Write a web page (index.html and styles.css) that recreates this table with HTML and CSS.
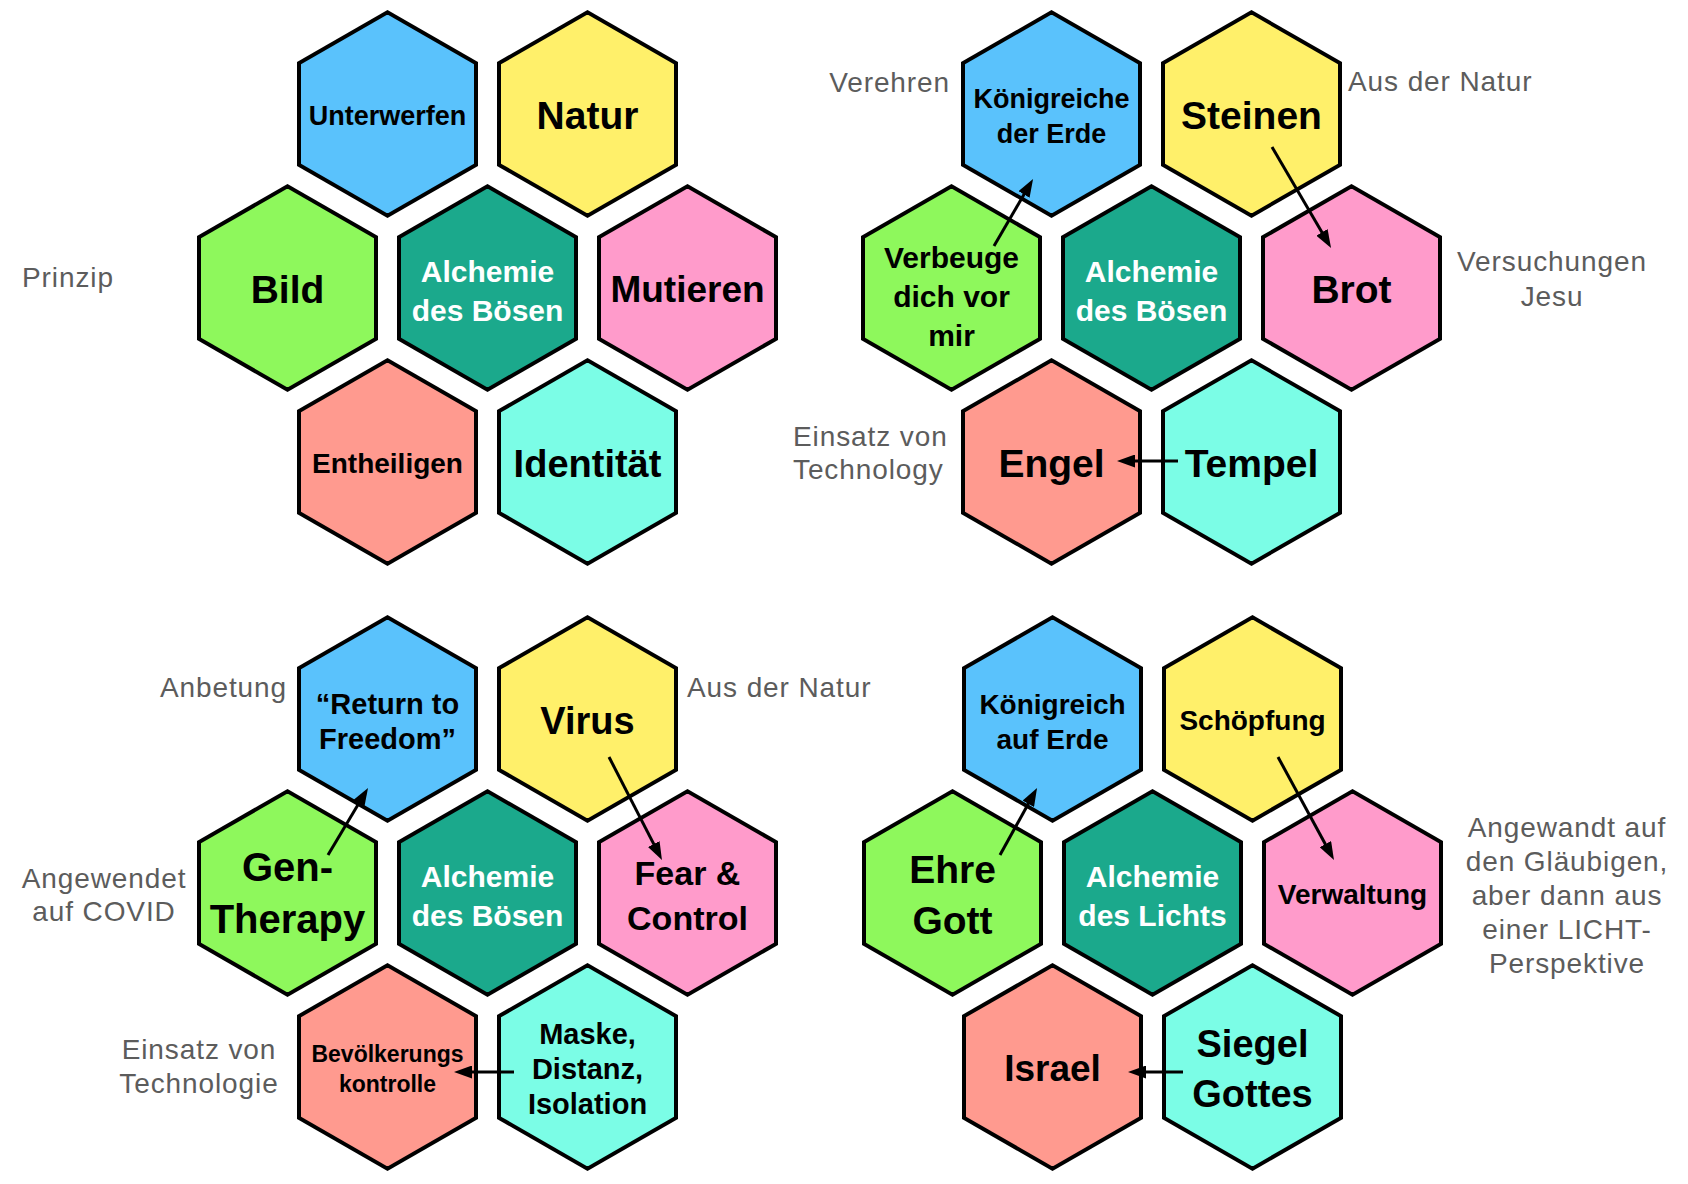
FILE: index.html
```html
<!DOCTYPE html>
<html lang="de">
<head>
<meta charset="utf-8">
<title>Alchemie</title>
<link rel="stylesheet" href="styles.css">
</head>
<body>
<div class="page">

  <section class="cluster">
    <div class="row">
      <div class="hex"><div class="fill blue s27">Unterwerfen</div></div>
      <div class="hex"><div class="fill yellow s39">Natur</div></div>
    </div>
    <div class="row">
      <div class="hex"><div class="fill green s39">Bild</div></div>
      <div class="hex"><div class="fill teal s30">Alchemie<br>des Bösen</div></div>
      <div class="hex"><div class="fill pink s37">Mutieren</div></div>
    </div>
    <div class="row">
      <div class="hex"><div class="fill salmon s28">Entheiligen</div></div>
      <div class="hex"><div class="fill cyan s38">Identität</div></div>
    </div>
    <p class="note n-prinzip">Prinzip</p>
  </section>

  <section class="cluster">
    <div class="row">
      <div class="hex"><div class="fill blue s27 lh35">Königreiche<br>der Erde</div></div>
      <div class="hex"><div class="fill yellow s39">Steinen</div></div>
    </div>
    <div class="row">
      <div class="hex"><div class="fill green s30 v16">Verbeuge<br>dich vor<br>mir</div></div>
      <div class="hex"><div class="fill teal s30">Alchemie<br>des Bösen</div></div>
      <div class="hex"><div class="fill pink s39">Brot</div></div>
    </div>
    <div class="row">
      <div class="hex"><div class="fill salmon s39">Engel</div></div>
      <div class="hex"><div class="fill cyan s39">Tempel</div></div>
    </div>
    <p class="note n-verehren">Verehren</p>
    <p class="note n-natur2">Aus der Natur</p>
    <p class="note n-versuch">Versuchungen<br>Jesu</p>
    <p class="note n-einsatz2">Einsatz von<br>Technology</p>
    <svg class="arrows" width="581" height="556" viewBox="0 0 581 556">
      <defs>
        <marker id="ah2" viewBox="0 0 18 13" refX="8" refY="6.5" markerWidth="18" markerHeight="13" markerUnits="userSpaceOnUse" orient="auto">
          <path d="M0 0 L18 6.5 L0 13 Z" fill="#000"/>
        </marker>
      </defs>
      <line x1="133" y1="236" x2="167" y2="177.6" marker-end="url(#ah2)"/>
      <line x1="411" y1="137" x2="465" y2="229.3" marker-end="url(#ah2)"/>
      <line x1="317" y1="451" x2="266" y2="451" marker-end="url(#ah2)"/>
    </svg>
  </section>

  <section class="cluster">
    <div class="row">
      <div class="hex"><div class="fill blue s29 lh35">“Return to<br>Freedom”</div></div>
      <div class="hex"><div class="fill yellow s38">Virus</div></div>
    </div>
    <div class="row">
      <div class="hex"><div class="fill green s40 v0">Gen-<br>Therapy</div></div>
      <div class="hex"><div class="fill teal s30">Alchemie<br>des Bösen</div></div>
      <div class="hex"><div class="fill pink s34">Fear &amp;<br>Control</div></div>
    </div>
    <div class="row">
      <div class="hex"><div class="fill salmon s23 v6">Bevölkerungs<br>kontrolle</div></div>
      <div class="hex"><div class="fill cyan s29 lh35">Maske,<br>Distanz,<br>Isolation</div></div>
    </div>
    <p class="note n-anbetung">Anbetung</p>
    <p class="note n-natur3">Aus der Natur</p>
    <p class="note n-covid">Angewendet<br>auf COVID</p>
    <p class="note n-einsatz3">Einsatz von<br>Technologie</p>
    <svg class="arrows" width="581" height="556" viewBox="0 0 581 556">
      <defs>
        <marker id="ah3" viewBox="0 0 18 13" refX="8" refY="6.5" markerWidth="18" markerHeight="13" markerUnits="userSpaceOnUse" orient="auto">
          <path d="M0 0 L18 6.5 L0 13 Z" fill="#000"/>
        </marker>
      </defs>
      <line x1="131" y1="240" x2="165.9" y2="181.6" marker-end="url(#ah3)"/>
      <line x1="412" y1="142" x2="460.4" y2="236.1" marker-end="url(#ah3)"/>
      <line x1="317" y1="457" x2="267" y2="457" marker-end="url(#ah3)"/>
    </svg>
  </section>

  <section class="cluster shift">
    <div class="row">
      <div class="hex"><div class="fill blue s28 lh35">Königreich<br>auf Erde</div></div>
      <div class="hex"><div class="fill yellow s28">Schöpfung</div></div>
    </div>
    <div class="row">
      <div class="hex"><div class="fill green s39">Ehre<br>Gott</div></div>
      <div class="hex"><div class="fill teal s30">Alchemie<br>des Lichts</div></div>
      <div class="hex"><div class="fill pink s28">Verwaltung</div></div>
    </div>
    <div class="row">
      <div class="hex"><div class="fill salmon s37">Israel</div></div>
      <div class="hex"><div class="fill cyan s38">Siegel<br>Gottes</div></div>
    </div>
    <p class="note n-angewandt">Angewandt auf<br>den Gläubigen,<br>aber dann aus<br>einer LICHT-<br>Perspektive</p>
    <svg class="arrows" width="581" height="556" viewBox="0 0 581 556">
      <defs>
        <marker id="ah4" viewBox="0 0 18 13" refX="8" refY="6.5" markerWidth="18" markerHeight="13" markerUnits="userSpaceOnUse" orient="auto">
          <path d="M0 0 L18 6.5 L0 13 Z" fill="#000"/>
        </marker>
      </defs>
      <line x1="137" y1="240" x2="169.2" y2="181.8" marker-end="url(#ah4)"/>
      <line x1="415" y1="142" x2="466.2" y2="236.2" marker-end="url(#ah4)"/>
      <line x1="320" y1="457" x2="275" y2="457" marker-end="url(#ah4)"/>
    </svg>
  </section>

</div>
</body>
</html>
```

FILE: styles.css
```css
html, body {
  margin: 0;
  padding: 0;
  background: #ffffff;
}

body {
  overflow: hidden;
}

.page {
  width: 1688px;
  height: 1184px;
  box-sizing: border-box;
  padding: 10px 0 0 197px;
  display: grid;
  grid-template-columns: 581px 581px;
  grid-template-rows: 556px 556px;
  column-gap: 83px;
  row-gap: 49px;
  overflow: hidden;
  font-family: "Liberation Sans", Arial, Helvetica, sans-serif;
}

.cluster {
  position: relative;
  display: flex;
  flex-direction: column;
  align-items: center;
}

.cluster.shift {
  margin-left: 2px;
}

.row {
  display: flex;
  gap: 19px;
}

.row + .row {
  margin-top: -34px;
}

.hex {
  width: 181px;
  height: 208px;
  box-sizing: border-box;
  padding: 4.6px 4px;
  background: #000;
  clip-path: polygon(50% 0, 100% 25%, 100% 75%, 50% 100%, 0 75%, 0 25%);
}

.fill {
  width: 100%;
  height: 100%;
  box-sizing: border-box;
  padding-top: 5px;
  clip-path: polygon(50% 0, 100% 25%, 100% 75%, 50% 100%, 0 75%, 0 25%);
  display: flex;
  align-items: center;
  justify-content: center;
  text-align: center;
  font-weight: 700;
  line-height: 1.3;
  color: #000;
  white-space: nowrap;
}

.fill.v0  { padding-top: 0; }
.fill.v6  { padding-top: 6px; }
.fill.v16 { padding-top: 16px; }
.fill.lh35 { line-height: 35px; }

.blue   { background: #5ac2fc; }
.yellow { background: #fff06a; }
.green  { background: #8ef85c; }
.teal   { background: #1ba98c; color: #ffffff; }
.pink   { background: #ff9bcb; }
.salmon { background: #ff9a8f; }
.cyan   { background: #7bfde6; }

.s23 { font-size: 23px; }
.s27 { font-size: 27px; }
.s28 { font-size: 28px; }
.s29 { font-size: 29px; }
.s30 { font-size: 30px; }
.s34 { font-size: 34px; }
.s37 { font-size: 37px; }
.s38 { font-size: 38px; }
.s39 { font-size: 39px; }
.s40 { font-size: 40px; }

.note {
  position: absolute;
  margin: 0;
  font-size: 28px;
  line-height: 33px;
  letter-spacing: 0.9px;
  font-weight: 400;
  color: #5c5c5c;
  white-space: nowrap;
}

.n-prinzip   { left: -175px; top: 251px; }

.n-verehren  { right: 492px; top: 56px; }
.n-natur2    { left: 487px; top: 55px; }
.n-versuch   { left: 571px; top: 234px; width: 240px; text-align: center; line-height: 35px; }
.n-einsatz2  { left: -68px; top: 410px; line-height: 33px; }

.n-anbetung  { right: 491px; top: 56px; }
.n-natur3    { left: 490px; top: 56px; }
.n-covid     { left: -193px; top: 247px; width: 200px; text-align: center; }
.n-einsatz3  { left: -118px; top: 418px; width: 240px; text-align: center; line-height: 34px; }

.n-angewandt { left: 589px; top: 196px; width: 230px; text-align: center; line-height: 34px; }

.arrows {
  position: absolute;
  left: 0;
  top: 0;
  overflow: visible;
  pointer-events: none;
}

.arrows line {
  stroke: #000;
  stroke-width: 3px;
}
```
